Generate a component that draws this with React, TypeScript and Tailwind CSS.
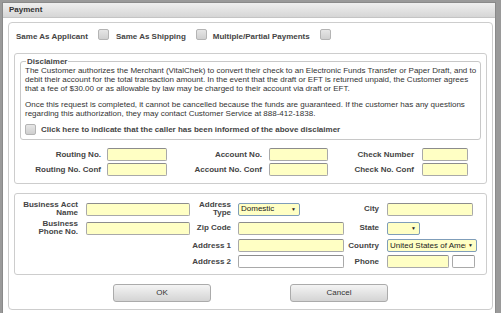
import React from 'react'

const FONT = { fontFamily: '"Liberation Sans", Arial, sans-serif' }

const DISCLAIMER_A = [
  'The Customer authorizes the Merchant (VitalChek) to convert their check to an Electronic Funds Transfer or Paper Draft, and to',
  'debit their account for the total transaction amount. In the event that the draft or EFT is returned unpaid, the Customer agrees',
  'that a fee of $30.00 or as allowable by law may be charged to their account via draft or EFT.',
]

const DISCLAIMER_B = [
  'Once this request is completed, it cannot be cancelled because the funds are guaranteed. If the customer has any questions',
  'regarding this authorization, they may contact Customer Service at 888-412-1838.',
]

function Check() {
  return (
    <span className="inline-block h-[11px] w-[11px] shrink-0 rounded-[2px] border border-[#b4b4b4] bg-gradient-to-b from-[#e6e6e6] to-[#cfcfcf]" />
  )
}

function Field({ w, white = false }: { w: string; white?: boolean }) {
  return (
    <div
      className={`h-[13px] ${w} shrink-0 rounded-[2px] border border-[#a9a9a9] border-t-[#8c8c8c] ${
        white ? 'bg-white' : 'bg-[#ffffc4]'
      }`}
    />
  )
}

function Select({ w, value = '' }: { w: string; value?: string }) {
  return (
    <div
      className={`flex h-[13px] ${w} shrink-0 items-center overflow-hidden rounded-[2px] border border-[#7f9db9] bg-[#ffffc4] pl-[2px] pr-[3px] text-[8px] leading-none text-[#222]`}
    >
      <span className="min-w-0 flex-1 overflow-hidden whitespace-nowrap">{value}</span>
      <span className="ml-[2px] shrink-0 text-[5px]">▼</span>
    </div>
  )
}

function Label({ w, children }: { w: string; children: React.ReactNode }) {
  return (
    <div className={`${w} shrink-0 text-right text-[8px] font-bold leading-[8px] text-[#444]`}>{children}</div>
  )
}

export default function App() {
  return (
    <div className="h-[313px] w-[501px] overflow-hidden bg-[#9a9a9a] pl-[2px] pt-[2px]" style={FONT}>
      <div className="h-[330px] w-[494px] border border-[#8a8a8a] bg-white">
        {/* title */}
        <div className="flex h-[15px] items-center border-b border-[#c4c4c4] bg-gradient-to-b from-[#efefef] to-[#d6d6d6] pl-[6px] text-[8px] font-bold text-[#333]">
          Payment
        </div>

        <div className="ml-[5px] mt-[4px] h-[288px] w-[485px] rounded-[4px] border border-[#cdcdcd] pt-[8px]">
          {/* option row */}
          <div className="flex h-[11px] items-center pl-[7px] text-[8px] font-bold text-[#444]">
            <span>Same As Applicant</span>
            <span className="ml-[10px]"><Check /></span>
            <span className="ml-[7px]">Same As Shipping</span>
            <span className="ml-[10px]"><Check /></span>
            <span className="ml-[6px]">Multiple/Partial Payments</span>
            <span className="ml-[10px]"><Check /></span>
          </div>

          {/* disclaimer + bank panel */}
          <div className="ml-[5px] mt-[11px] w-[473px] rounded-[3px] border border-[#cdcdcd] pb-[7px] pt-[3px]">
            <fieldset className="mx-[5px] rounded-[3px] border border-[#c8c8c8] px-[4px] pb-[4px]">
              <legend className="ml-[1px] px-[1px] text-[8px] font-bold leading-[9px] text-[#444]">Disclaimer</legend>
              <div className="text-[8px] leading-[9px] text-[#333]">
                {DISCLAIMER_A.map((l) => (
                  <div key={l} className="whitespace-nowrap">{l}</div>
                ))}
                <div className="mt-[7px]">
                  {DISCLAIMER_B.map((l) => (
                    <div key={l} className="whitespace-nowrap">{l}</div>
                  ))}
                </div>
                <div className="mt-[6px] flex items-center gap-[5px] font-bold text-[#444]">
                  <Check />
                  <span>Click here to indicate that the caller has been informed of the above disclaimer</span>
                </div>
              </div>
            </fieldset>

            <div className="mt-[8px] flex flex-col gap-[2px]">
              {[
                ['Routing No.', 'Account No.', 'Check Number'],
                ['Routing No. Conf', 'Account No. Conf', 'Check No. Conf'],
              ].map((r) => (
                <div key={r[0]} className="flex items-center">
                  <Label w="w-[86px]">{r[0]}</Label>
                  <div className="ml-[6px]"><Field w="w-[60px]" /></div>
                  <Label w="w-[95px]">{r[1]}</Label>
                  <div className="ml-[7px]"><Field w="w-[59px]" /></div>
                  <Label w="w-[86px]">{r[2]}</Label>
                  <div className="ml-[8px]"><Field w="w-[46px]" /></div>
                </div>
              ))}
            </div>
          </div>

          {/* address panel */}
          <div className="ml-[5px] mt-[9px] flex w-[473px] flex-col gap-[3px] rounded-[3px] border border-[#cdcdcd] pb-[6px] pt-[7px]">
            <div className="flex items-center">
              <Label w="w-[63px]">Business Acct<br />Name</Label>
              <div className="ml-[8px]"><Field w="w-[104px]" /></div>
              <Label w="w-[41px]">Address<br />Type</Label>
              <div className="ml-[7px]"><Select w="w-[62px]" value="Domestic" /></div>
              <Label w="w-[79px]">City</Label>
              <div className="ml-[8px]"><Field w="w-[86px]" /></div>
            </div>
            <div className="flex items-center">
              <Label w="w-[63px]">Business<br />Phone No.</Label>
              <div className="ml-[8px]"><Field w="w-[104px]" /></div>
              <Label w="w-[41px]">Zip Code</Label>
              <div className="ml-[7px]"><Field w="w-[106px]" /></div>
              <Label w="w-[35px]">State</Label>
              <div className="ml-[8px]"><Select w="w-[33px]" /></div>
            </div>
            <div className="flex items-center">
              <div className="w-[175px] shrink-0" />
              <Label w="w-[41px]">Address 1</Label>
              <div className="ml-[7px]"><Field w="w-[106px]" /></div>
              <Label w="w-[35px]">Country</Label>
              <div className="ml-[8px]"><Select w="w-[90px]" value="United States of America" /></div>
            </div>
            <div className="flex items-center">
              <div className="w-[175px] shrink-0" />
              <Label w="w-[41px]">Address 2</Label>
              <div className="ml-[7px]"><Field w="w-[106px]" white /></div>
              <Label w="w-[35px]">Phone</Label>
              <div className="ml-[8px]"><Field w="w-[62px]" /></div>
              <div className="ml-[3px]"><Field w="w-[23px]" white /></div>
            </div>
          </div>

          {/* buttons */}
          <div className="mt-[9px] flex justify-center gap-[79px]">
            {['OK', 'Cancel'].map((b) => (
              <div
                key={b}
                className="flex h-[18px] w-[98px] items-center justify-center rounded-[3px] border border-[#ababab] bg-gradient-to-b from-[#f4f4f4] to-[#d4d4d4] text-[8px] text-[#333]"
              >
                {b}
              </div>
            ))}
          </div>
        </div>
      </div>
    </div>
  )
}
